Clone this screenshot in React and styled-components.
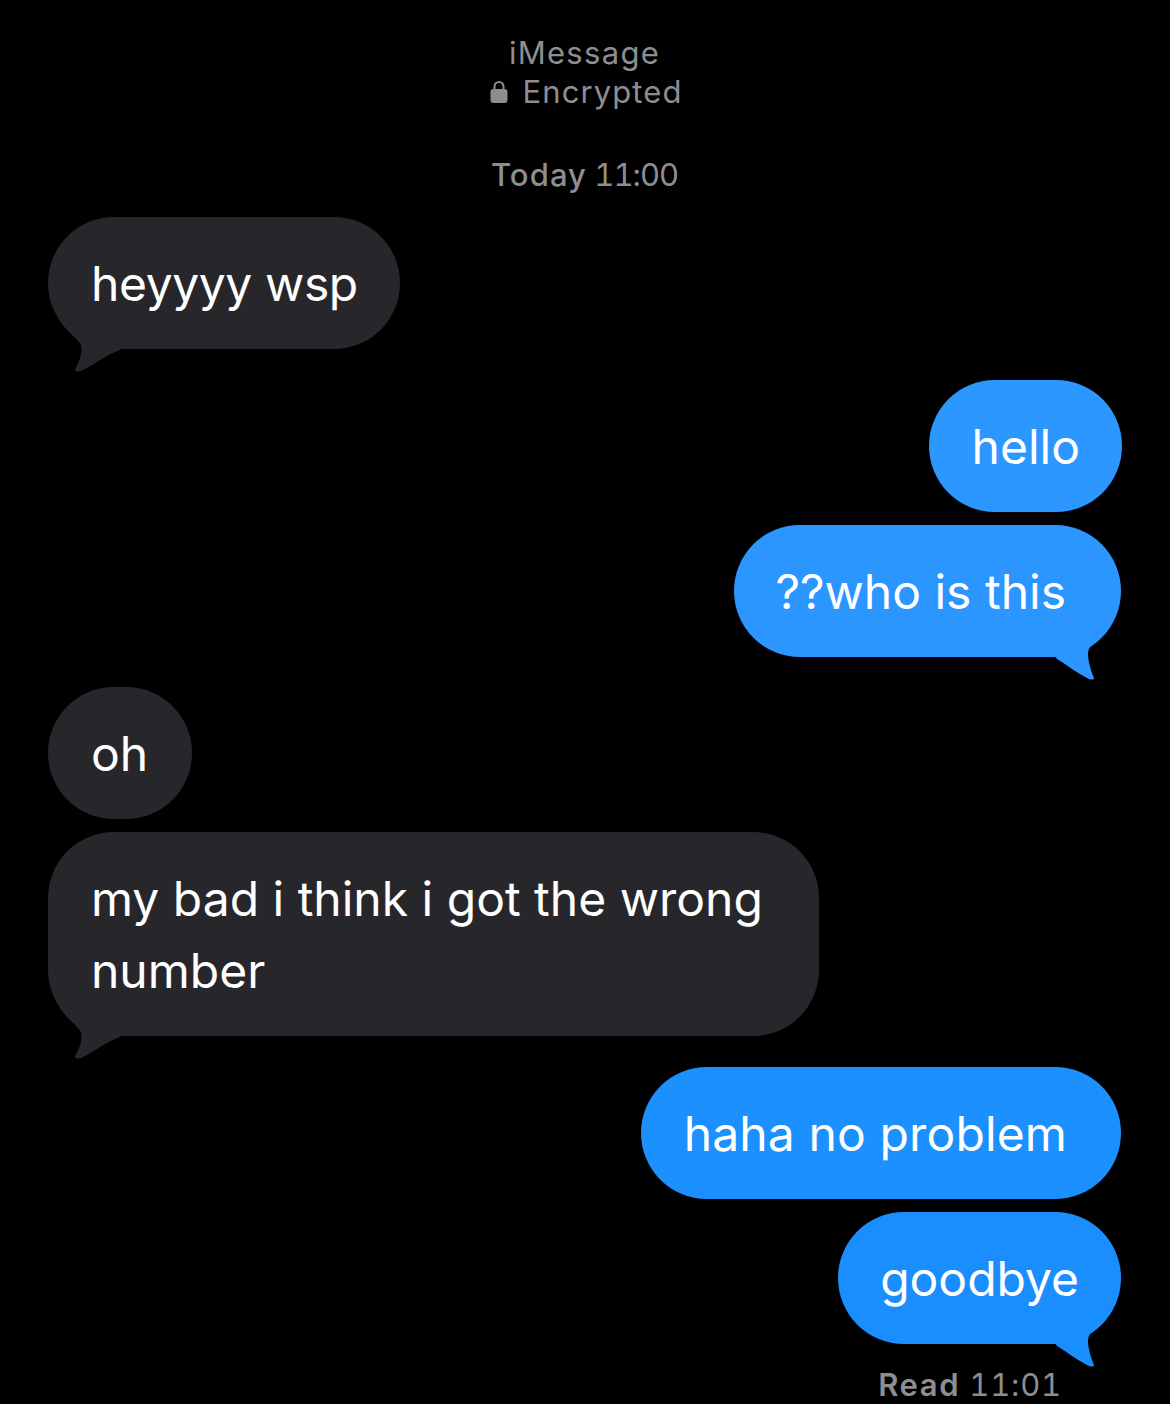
import React from 'react'
import styled, { createGlobalStyle } from 'styled-components'

const GlobalStyle = createGlobalStyle`
    html, body {
        margin: 0;
        padding: 0;
        background-color: #000;
    }
`

const Screen = styled.div`
    width: 1170px;
    height: 1404px;
    box-sizing: border-box;
    padding: 33px 49px 0 48px;
    background-color: #000;
    overflow: hidden;
    font-family: Inter, "Liberation Sans", sans-serif;
    display: flex;
    flex-direction: column;
`

const Header = styled.div`
    display: flex;
    flex-direction: column;
    align-items: center;
    color: #8e8e92;
    font-size: 31px;
    line-height: 39px;
    letter-spacing: 1.3px;
`

const EncryptedRow = styled.div`
    display: flex;
    align-items: center;
    gap: 14px;
    padding-left: 4px;
    letter-spacing: 1.1px;
`

const Timestamp = styled.div`
    margin-top: 44px;
    text-align: center;
    color: #8e8e92;
    font-size: 31px;
    line-height: 39px;
    letter-spacing: -1px;
    font-variant-numeric: tabular-nums;
`

const Strong = styled.span`
    font-weight: ${(p) => p.$weight};
    letter-spacing: ${(p) => p.$spacing}px;
`

const Thread = styled.div`
    display: flex;
    flex-direction: column;
    margin-top: 23px;
`

const Bubble = styled.div`
    position: relative;
    box-sizing: border-box;
    align-self: ${(p) => (p.$mine ? 'flex-end' : 'flex-start')};
    width: ${(p) => p.$width || 'auto'};
    margin-top: ${(p) => p.$gap}px;
    margin-right: ${(p) => p.$nudge || 0}px;
    padding: 31px ${(p) => p.$padRight || 43}px 29px ${(p) => p.$padLeft || 43}px;
    border-radius: 66px;
    background-color: ${(p) => p.$color || '#27272b'};
    color: #fff;
    font-size: 48px;
    line-height: 72px;
    letter-spacing: ${(p) => p.$spacing || 0}px;
`

const TailSvg = styled.svg`
    position: absolute;
    bottom: -24px;
    ${(p) => (p.$mine ? 'right: 0;' : 'left: 0;')}
`

const ReadLine = styled.div`
    align-self: flex-end;
    margin-top: 21px;
    margin-right: 59px;
    color: #8e8e92;
    font-size: 31px;
    line-height: 39px;
    letter-spacing: 0.8px;
    font-variant-numeric: tabular-nums;
`

const LockIcon = () => (
    <svg width="18" height="25" viewBox="0 0 18 25">
        <path d="M4.5 11V7.5a4.5 4.5 0 0 1 9 0V11" fill="none" stroke="#8e8e92" strokeWidth="2" />
        <rect x="0.5" y="10" width="17" height="14" rx="3" fill="#8e8e92" />
    </svg>
)

const Tail = ({ mine, color }) => (
    <TailSvg $mine={mine} width="80" height="60" viewBox="0 0 80 60">
        {mine ? (
            <path
                d="M72 0C68 8 62 14 59 17C52 22 47 26 47 33C47 40 50 50 53 57C53 59 50 59 46 57C36 52 26 44 16 38L10 30L60 0Z"
                fill={color}
            />
        ) : (
            <path
                d="M12 8C18 18 28 24 33 32C35 40 31 49 27 56C27 59 30 59 33 58C45 53 57 42 72 37L72 5Z"
                fill={color}
            />
        )}
    </TailSvg>
)

const messages = [
    { text: 'heyyyy wsp', gap: 0, tail: true, spacing: -0.4, padRight: 42 },
    { text: 'hello', mine: true, gap: 31, color: '#2b97ff', padRight: 42, nudge: -1 },
    { text: '??who is this', mine: true, gap: 13, color: '#2b96ff', tail: true, padRight: 55, padLeft: 41 },
    { text: 'oh', gap: 30, padRight: 44 },
    { text: 'my bad i think i got the wrong number', gap: 13, width: '771px', tail: true },
    { text: 'haha no problem', mine: true, gap: 31, color: '#1c90ff', padRight: 54, spacing: 0.13 },
    { text: 'goodbye', mine: true, gap: 13, color: '#1a8eff', tail: true, padRight: 42, padLeft: 42 },
]

const App = () => {
    return (
        <Screen>
            <GlobalStyle />
            <Header>
                <div>iMessage</div>
                <EncryptedRow>
                    <LockIcon />
                    <span>Encrypted</span>
                </EncryptedRow>
            </Header>
            <Timestamp>
                <Strong $weight={500} $spacing={1.1}>Today</Strong> 11:00
            </Timestamp>
            <Thread>
                {messages.map((m) => (
                    <Bubble
                        key={m.text}
                        $mine={m.mine}
                        $gap={m.gap}
                        $color={m.color}
                        $width={m.width}
                        $padRight={m.padRight}
                        $padLeft={m.padLeft}
                        $spacing={m.spacing}
                        $nudge={m.nudge}
                    >
                        {m.text}
                        {m.tail && <Tail mine={m.mine} color={m.color || '#27272b'} />}
                    </Bubble>
                ))}
                <ReadLine>
                    <Strong $weight={600} $spacing={1.6}>Read</Strong> 11:01
                </ReadLine>
            </Thread>
        </Screen>
    )
}

export default App
